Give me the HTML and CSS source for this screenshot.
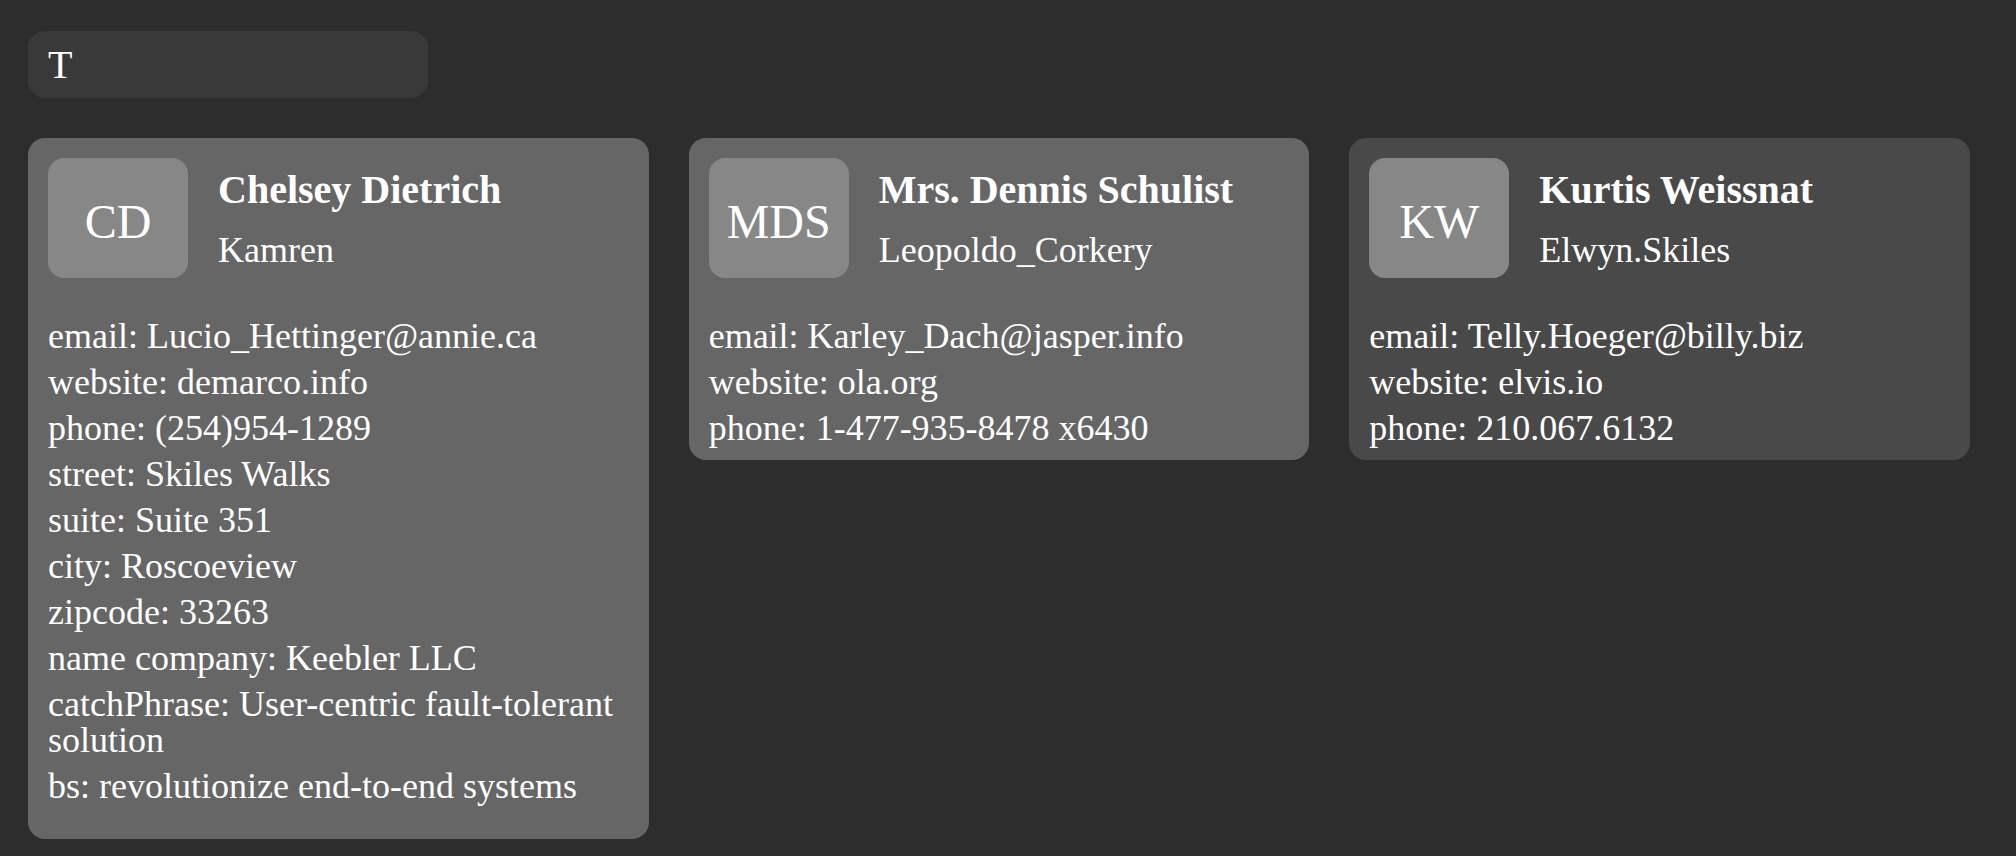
FILE: index.html
```html
<!DOCTYPE html>
<html lang="en">
<head>
<meta charset="utf-8">
<title>Users</title>
<link rel="stylesheet" href="styles.css">
</head>
<body>
<main class="page">
  <input class="search" type="text" value="T" aria-label="Search">
  <section class="cards">
    <article class="card card--open">
      <header class="card-head">
        <div class="avatar">CD</div>
        <div class="ident">
          <h2 class="name">Chelsey Dietrich</h2>
          <div class="username">Kamren</div>
        </div>
      </header>
      <ul class="details">
        <li>email: Lucio_Hettinger@annie.ca</li>
        <li>website: demarco.info</li>
        <li>phone: (254)954-1289</li>
        <li>street: Skiles Walks</li>
        <li>suite: Suite 351</li>
        <li>city: Roscoeview</li>
        <li>zipcode: 33263</li>
        <li>name company: Keebler LLC</li>
        <li>catchPhrase: User-centric fault-tolerant solution</li>
        <li>bs: revolutionize end-to-end systems</li>
      </ul>
    </article>
    <article class="card">
      <header class="card-head">
        <div class="avatar">MDS</div>
        <div class="ident">
          <h2 class="name">Mrs. Dennis Schulist</h2>
          <div class="username">Leopoldo_Corkery</div>
        </div>
      </header>
      <ul class="details">
        <li>email: Karley_Dach@jasper.info</li>
        <li>website: ola.org</li>
        <li>phone: 1-477-935-8478 x6430</li>
      </ul>
    </article>
    <article class="card card--dim">
      <header class="card-head">
        <div class="avatar">KW</div>
        <div class="ident">
          <h2 class="name">Kurtis Weissnat</h2>
          <div class="username">Elwyn.Skiles</div>
        </div>
      </header>
      <ul class="details">
        <li>email: Telly.Hoeger@billy.biz</li>
        <li>website: elvis.io</li>
        <li>phone: 210.067.6132</li>
      </ul>
    </article>
  </section>
</main>
</body>
</html>
```
FILE: styles.css
```css
html, body {
  margin: 0;
  padding: 0;
  background: #2d2d2d;
}

body {
  font-family: "Liberation Serif", "Times New Roman", serif;
  color: #ffffff;
}

.page {
  padding: 31px 28px 0 28px;
  display: flex;
  flex-direction: column;
  align-items: flex-start;
  gap: 40px;
}

.search {
  box-sizing: border-box;
  width: 400px;
  height: 67px;
  padding: 0 20px;
  border: none;
  outline: none;
  border-radius: 17px;
  background: #393939;
  color: #ffffff;
  font-family: "Liberation Serif", "Times New Roman", serif;
  font-size: 40px;
}

.cards {
  width: 1942px;
  display: grid;
  grid-template-columns: repeat(3, 1fr);
  gap: 40px;
  align-items: start;
}

.card {
  box-sizing: border-box;
  background: #666666;
  border-radius: 17px;
  padding: 20px 20px 14px 20px;
}

.card--open {
  padding-bottom: 35px;
}

.card--dim {
  background: #494949;
}

.card-head {
  display: flex;
  align-items: center;
  gap: 30px;
}

.avatar {
  box-sizing: border-box;
  flex: 0 0 auto;
  width: 140px;
  height: 120px;
  padding-top: 7px;
  border-radius: 16px;
  background: #878787;
  display: flex;
  align-items: center;
  justify-content: center;
  font-size: 48px;
}

.ident {
  display: flex;
  flex-direction: column;
  gap: 16px;
}

.name {
  margin: 0;
  font-size: 40px;
  font-weight: bold;
}

.username {
  font-size: 36px;
}

.details {
  list-style: none;
  margin: 40px 0 0 0;
  padding: 0;
  display: flex;
  flex-direction: column;
  gap: 10px;
  font-size: 36px;
  line-height: 1;
}
```
